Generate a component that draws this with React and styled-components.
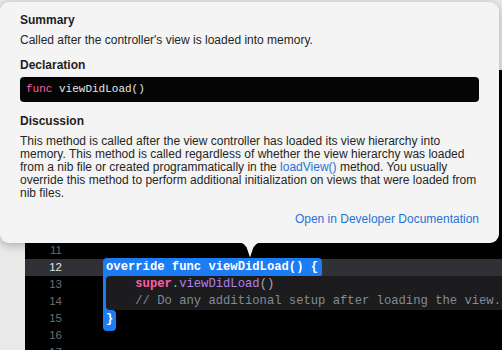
import React from 'react';
import styled, { createGlobalStyle } from 'styled-components';

const GlobalStyle = createGlobalStyle`
  html, body {
    margin: 0;
    padding: 0;
    background: #e9e9e9;
    overflow: hidden;
  }
`;

const Stage = styled.div`
  position: relative;
  width: 502px;
  height: 350px;
  overflow: hidden;
`;

const Editor = styled.div`
  margin: 70px 0 0 25px;
  height: 280px;
  padding-top: 172px;
  box-sizing: border-box;
  background: #000;
  font-family: "Liberation Mono", "DejaVu Sans Mono", monospace;
  font-size: 12.2px;
`;

const Line = styled.div`
  display: flex;
  height: 17px;
  line-height: 17px;
  background: ${(p) => (p.$current ? '#2f3137' : 'transparent')};
`;

const Num = styled.span`
  width: 37px;
  flex: none;
  text-align: right;
  color: ${(p) => (p.$current ? '#e4e4e4' : '#6e6e73')};
  font-family: "Liberation Sans", Arial, sans-serif;
  font-size: 11.5px;
`;

const Code = styled.span`
  flex: 1;
  padding-left: 41px;
  white-space: pre;
  color: #dedede;
`;

const Head = styled.span`
  display: inline-block;
  margin-top: -1px;
  height: 19px;
  line-height: 19px;
  padding: 0 4px 0 3px;
  background: #1b7cf4;
  border-radius: 4px 4px 4px 0;
  color: #fff;
  font-weight: bold;
`;

const Body = styled.span`
  flex: 1;
  margin-left: 41px;
  white-space: pre;
  overflow: hidden;
  background: linear-gradient(to right, #1b7cf4 0 8px, transparent 8px);
`;

const BodyInner = styled.span`
  display: block;
  height: 100%;
  margin-left: 3px;
  background: #1c1c1e;
  border-radius: ${(p) => p.$r};
  color: #a4abb3;
`;

const Close = styled.span`
  display: inline-block;
  height: 21px;
  line-height: 19px;
  padding: 0 3px;
  background: #1b7cf4;
  border-radius: 0 4px 4px 4px;
  color: #fff;
  font-weight: bold;
`;

const Kw = styled.span`
  color: #fc5fa3;
  font-weight: ${(p) => (p.$bold ? 'bold' : 'normal')};
`;

const Fn = styled.span`
  color: #b281eb;
`;

const Comment = styled.span`
  color: #7f8c98;
`;

const Popover = styled.div`
  position: absolute;
  left: 0;
  top: 2px;
  width: 499px;
  height: 241px;
  box-sizing: border-box;
  padding: 11px 20px;
  background: #f4f4f4;
  border-radius: 9px;
  box-shadow: 0 2px 10px rgba(0, 0, 0, 0.28);
  font-family: "Liberation Sans", Arial, sans-serif;
  color: #262626;
`;

const Arrow = styled.svg`
  position: absolute;
  left: 237px;
  bottom: -15px;
`;

const Title = styled.div`
  margin-top: ${(p) => p.$mt || 0}px;
  font-size: 12px;
  line-height: 15px;
  font-weight: bold;
  color: #1e1e1e;
`;

const Text = styled.div`
  margin-top: ${(p) => p.$mt || 0}px;
  font-size: 12px;
  line-height: ${(p) => p.$lh || 15}px;
  white-space: nowrap;
`;

const Decl = styled.div`
  margin-top: 4px;
  height: 25px;
  line-height: 25px;
  padding: 0 6px;
  background: #050505;
  border-radius: 4px;
  color: #e6e6e6;
  font-family: "Liberation Mono", "DejaVu Sans Mono", monospace;
  font-size: 11px;
`;

const Link = styled.span`
  color: #1f73d6;
`;

const Footer = styled.div`
  margin-top: 12px;
  text-align: right;
  font-size: 12px;
  line-height: 15px;
`;

export default function App() {
  return (
    <Stage>
      <GlobalStyle />
      <Editor>
        <Line>
          <Num>11</Num>
          <Code />
        </Line>
        <Line $current>
          <Num $current>12</Num>
          <Code>
            <Head>override func viewDidLoad() {'{'}</Head>
          </Code>
        </Line>
        <Line>
          <Num>13</Num>
          <Body>
            <BodyInner $r="4px 0 0 0">
              {'    '}
              <Kw $bold>super</Kw>.<Fn>viewDidLoad</Fn>()
            </BodyInner>
          </Body>
        </Line>
        <Line>
          <Num>14</Num>
          <Body>
            <BodyInner $r="0 0 0 4px">
              {'    '}
              <Comment>// Do any additional setup after loading the view.</Comment>
            </BodyInner>
          </Body>
        </Line>
        <Line>
          <Num>15</Num>
          <Code>
            <Close>{'}'}</Close>
          </Code>
        </Line>
        <Line>
          <Num>16</Num>
          <Code />
        </Line>
        <Line>
          <Num>17</Num>
          <Code />
        </Line>
      </Editor>

      <Popover>
        <Title>Summary</Title>
        <Text $mt={5}>Called after the controller's view is loaded into memory.</Text>
        <Title $mt={10}>Declaration</Title>
        <Decl>
          <Kw>func</Kw> viewDidLoad()
        </Decl>
        <Title $mt={12}>Discussion</Title>
        <Text $mt={6} $lh={13}>
          This method is called after the view controller has loaded its view hierarchy into<br />
          memory. This method is called regardless of whether the view hierarchy was loaded<br />
          from a nib file or created programmatically in the <Link>loadView()</Link> method. You usually<br />
          override this method to perform additional initialization on views that were loaded from<br />
          nib files.
        </Text>
        <Footer>
          <Link>Open in Developer Documentation</Link>
        </Footer>
        <Arrow width="26" height="16" viewBox="0 0 26 16">
          <path d="M0 0 Q8 0 10.5 8 L13 15.5 L15.5 8 Q18 0 26 0 Z" fill="#f4f4f4" />
        </Arrow>
      </Popover>
    </Stage>
  );
}
